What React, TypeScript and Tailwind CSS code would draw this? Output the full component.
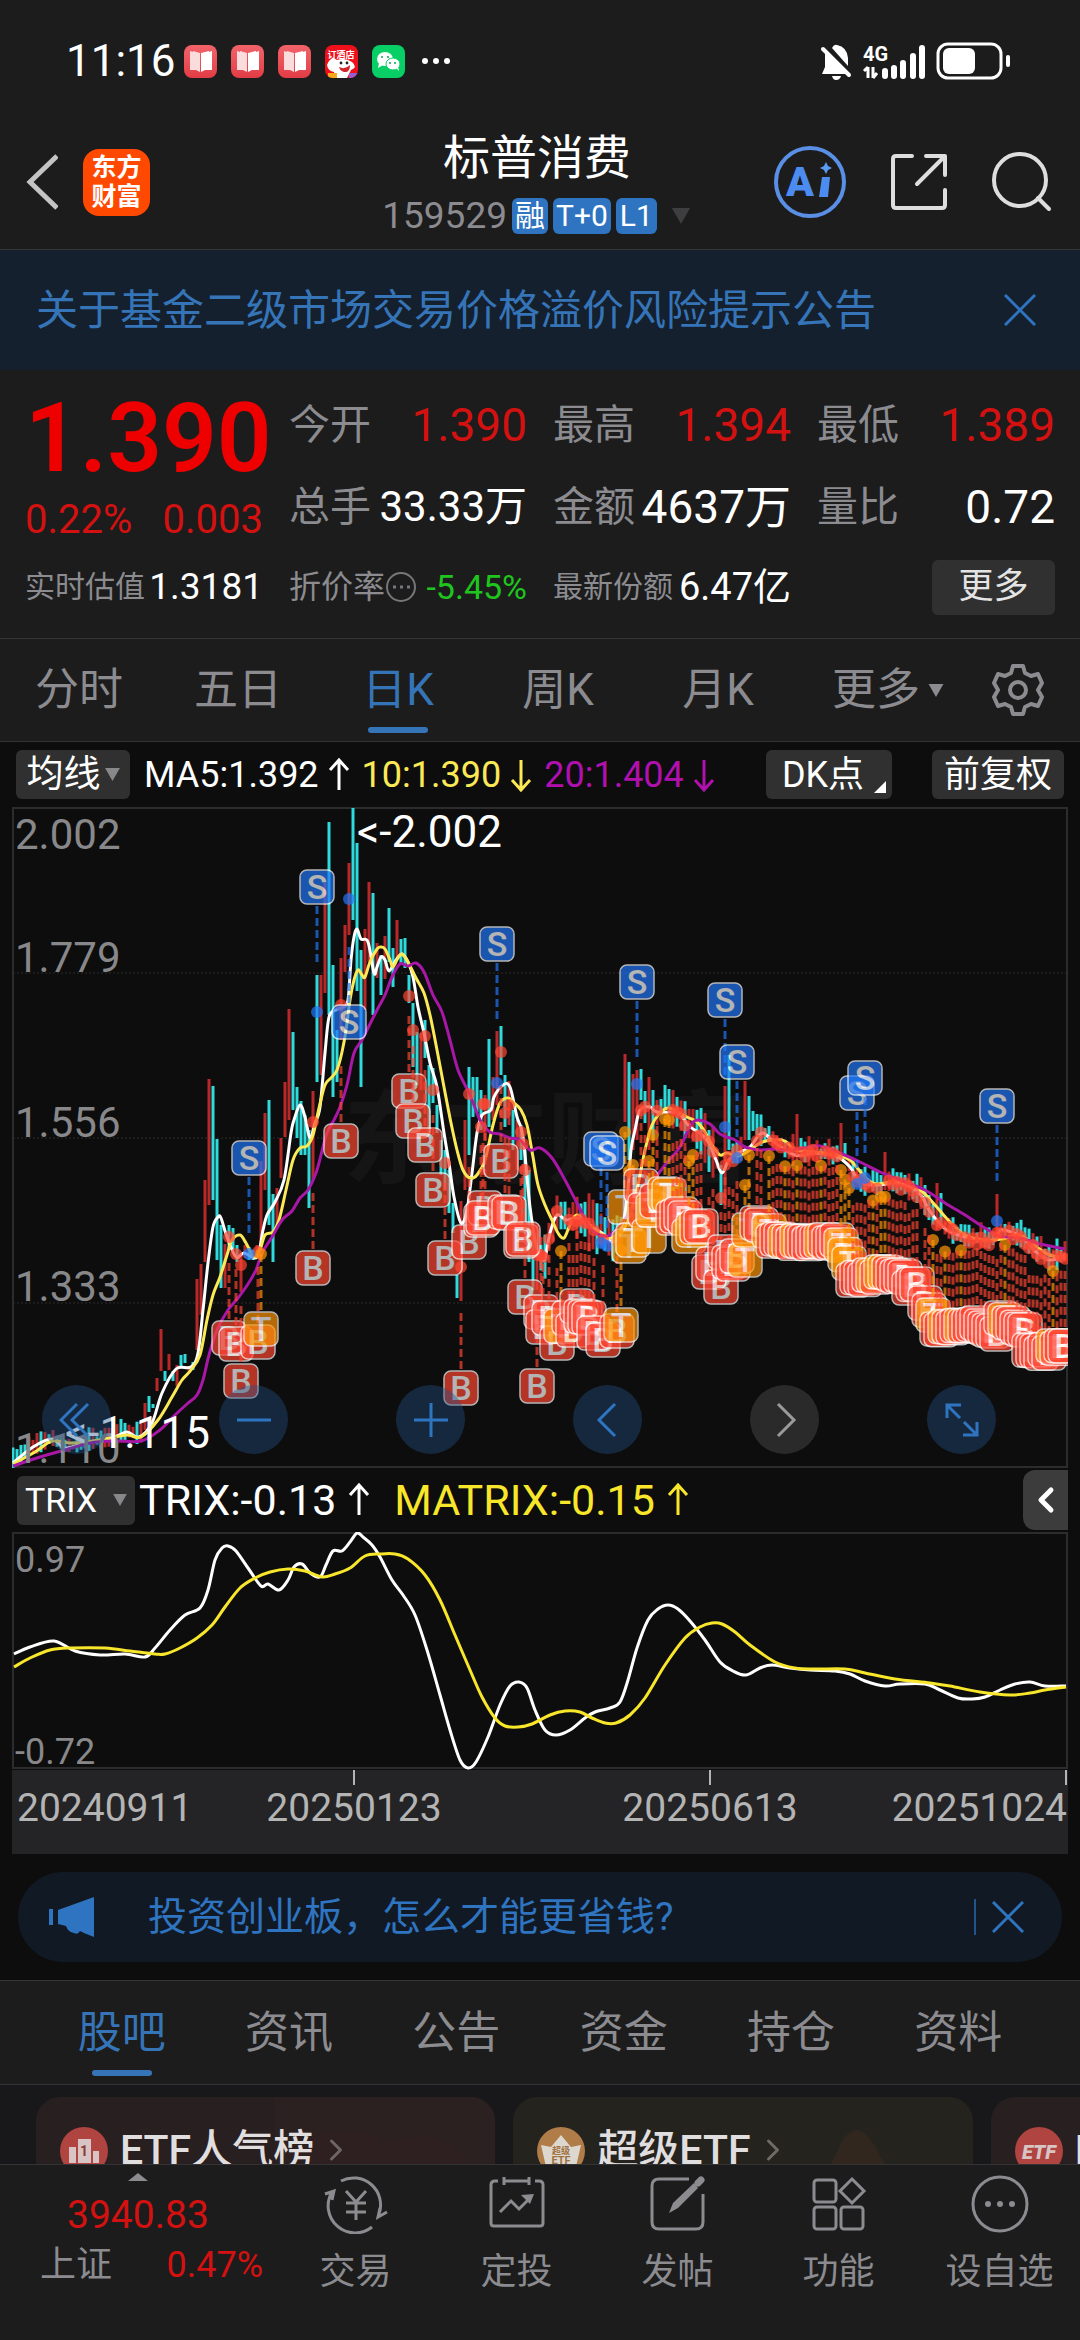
import React from 'react';
import { ChevronLeft, ChevronRight } from 'lucide-react';

type Point = [number, number];
type MarkType = 'B' | 'S' | 'T';

interface Mark {
  x: number;
  y: number;
  type: MarkType;
  dot?: number;
}

// ---------- chart helpers ----------

const smooth = (pts: Point[]) => {
  let d = `M${pts[0][0]} ${pts[0][1]}`;
  for (let i = 0; i < pts.length - 1; i++) {
    const p0 = pts[i - 1] || pts[i];
    const p1 = pts[i];
    const p2 = pts[i + 1];
    const p3 = pts[i + 2] || p2;
    const c = [
      p1[0] + (p2[0] - p0[0]) / 6,
      p1[1] + (p2[1] - p0[1]) / 6,
      p2[0] - (p3[0] - p1[0]) / 6,
      p2[1] - (p3[1] - p1[1]) / 6,
    ].map(v => v.toFixed(1));
    d += `C${c[0]} ${c[1]} ${c[2]} ${c[3]} ${p2[0]} ${p2[1]}`;
  }
  return d;
};

const valueAt = (pts: Point[], x: number) => {
  for (let i = 1; i < pts.length; i++) {
    if (pts[i][0] >= x) {
      const [ax, ay] = pts[i - 1];
      const [bx, by] = pts[i];
      return ay + ((x - ax) / (bx - ax || 1)) * (by - ay);
    }
  }
  return pts[pts.length - 1][1];
};

const noise = (n: number) => {
  const v = Math.sin(n * 12.9898) * 43758.5453;
  return v - Math.floor(v);
};

// ---------- chart data ----------

const ma5: Point[] = [
  [13, 1463], [33, 1447], [52, 1439], [65, 1448], [86, 1443], [114, 1437], [127, 1432], [139, 1437], [152, 1423],
  [162, 1393], [176, 1369], [191, 1367], [198, 1353], [203, 1310], [208, 1263], [213, 1227], [218, 1217], [221, 1218],
  [227, 1237], [236, 1257], [244, 1253], [257, 1257], [263, 1230], [267, 1215], [275, 1202], [284, 1180], [291, 1133],
  [294, 1120], [300, 1105], [305, 1117], [310, 1138], [315, 1123], [320, 1107], [325, 1053], [329, 1017], [336, 1010],
  [343, 1007], [348, 1000], [351, 960], [354, 937], [357, 929], [361, 939], [368, 942], [374, 973], [377, 967],
  [381, 957], [385, 960], [389, 971], [396, 960], [402, 954], [408, 962], [413, 977], [418, 1007], [424, 1033],
  [430, 1063], [437, 1087], [444, 1133], [449, 1163], [454, 1197], [461, 1223], [467, 1210], [472, 1173], [477, 1133],
  [482, 1115], [491, 1110], [494, 1097], [503, 1085], [510, 1087], [517, 1117], [523, 1137], [530, 1207], [537, 1250],
  [541, 1258], [545, 1258], [550, 1233], [557, 1215], [566, 1220], [578, 1218], [588, 1225], [602, 1233], [614, 1242],
  [623, 1223], [628, 1190], [631, 1150], [635, 1130], [640, 1110], [650, 1107], [657, 1112], [678, 1113], [688, 1125],
  [702, 1135], [709, 1143], [716, 1160], [722, 1173], [729, 1160], [740, 1152], [750, 1147], [762, 1133], [774, 1142],
  [795, 1155], [815, 1153], [836, 1156], [850, 1167], [860, 1182], [877, 1185], [898, 1183], [919, 1193], [929, 1210],
  [943, 1227], [953, 1233], [970, 1238], [995, 1240], [1001, 1230], [1022, 1237], [1036, 1252], [1050, 1260], [1065, 1255],
];

const ma10: Point[] = [
  [13, 1464], [35, 1452], [52, 1441], [70, 1443], [86, 1442], [105, 1439], [127, 1435], [141, 1437], [158, 1420],
  [172, 1397], [182, 1380], [191, 1370], [200, 1355], [207, 1320], [213, 1295], [220, 1277], [227, 1255], [232, 1240],
  [240, 1235], [246, 1243], [254, 1257], [260, 1250], [265, 1235], [273, 1232], [279, 1220], [286, 1190], [293, 1160],
  [300, 1148], [307, 1146], [313, 1135], [319, 1108], [325, 1085], [331, 1078], [337, 1070], [342, 1052], [346, 1030],
  [350, 1000], [354, 980], [358, 970], [362, 975], [365, 977], [370, 962], [377, 949], [381, 947], [385, 949],
  [390, 960], [393, 967], [398, 958], [402, 954], [408, 962], [416, 978], [424, 993], [430, 1015], [437, 1050],
  [444, 1087], [451, 1123], [457, 1150], [463, 1170], [470, 1178], [477, 1175], [485, 1160], [493, 1125], [500, 1103],
  [508, 1098], [514, 1103], [521, 1110], [527, 1125], [533, 1157], [538, 1185], [545, 1205], [552, 1220], [558, 1233],
  [564, 1238], [570, 1225], [577, 1215], [590, 1225], [603, 1235], [612, 1238], [622, 1232], [630, 1215], [637, 1190],
  [645, 1150], [652, 1125], [660, 1113], [668, 1108], [676, 1111], [687, 1117], [697, 1122], [705, 1132], [712, 1145],
  [720, 1155], [727, 1153], [738, 1156], [750, 1150], [760, 1143], [772, 1140], [785, 1141], [795, 1150], [815, 1152],
  [836, 1155], [850, 1160], [866, 1178], [877, 1184], [898, 1181], [920, 1190], [935, 1205], [948, 1220], [965, 1235],
  [985, 1240], [1002, 1239], [1020, 1235], [1035, 1246], [1050, 1255], [1065, 1258],
];

const ma20: Point[] = [
  [13, 1466], [40, 1457], [65, 1450], [90, 1443], [115, 1441], [141, 1441], [160, 1430], [175, 1415], [187, 1404],
  [197, 1395], [203, 1380], [209, 1355], [217, 1330], [228, 1310], [238, 1298], [248, 1284], [256, 1270], [262, 1253],
  [272, 1237], [282, 1220], [292, 1211], [300, 1198], [308, 1190], [316, 1173], [321, 1155], [327, 1133], [334, 1120],
  [340, 1107], [347, 1085], [354, 1053], [362, 1040], [368, 1028], [377, 1010], [385, 995], [392, 977], [400, 964],
  [408, 966], [416, 963], [424, 972], [433, 995], [442, 1012], [450, 1040], [458, 1070], [470, 1095], [480, 1120],
  [490, 1132], [500, 1134], [510, 1138], [520, 1140], [530, 1150], [540, 1148], [552, 1158], [565, 1180], [578, 1205],
  [590, 1228], [604, 1236], [614, 1232], [628, 1215], [650, 1185], [665, 1165], [680, 1147], [688, 1130], [693, 1122],
  [699, 1120], [710, 1124], [720, 1134], [735, 1140], [745, 1147], [760, 1150], [775, 1149], [790, 1150], [805, 1148],
  [820, 1146], [840, 1153], [860, 1162], [880, 1172], [900, 1180], [925, 1190], [945, 1203], [965, 1215], [985, 1228],
  [1000, 1236], [1020, 1238], [1040, 1244], [1065, 1249],
];

// x, high, low, 1 = up (red) / 0 = down (cyan)
const bars: [number, number, number, number][] = [
  [145, 1403, 1430, 1], [149, 1396, 1412, 0], [153, 1404, 1408, 0], [157, 1378, 1391, 1], [161, 1329, 1371, 1],
  [165, 1371, 1381, 0], [169, 1354, 1370, 1], [173, 1371, 1381, 0], [177, 1365, 1386, 1], [181, 1355, 1366, 0],
  [185, 1354, 1363, 0], [189, 1366, 1372, 1], [193, 1362, 1370, 0], [197, 1279, 1350, 1], [201, 1264, 1315, 1],
  [205, 1180, 1262, 1], [209, 1079, 1205, 1], [213, 1086, 1200, 0], [217, 1139, 1260, 0], [221, 1225, 1288, 0],
  [225, 1244, 1288, 1], [229, 1225, 1250, 0], [233, 1228, 1250, 0], [237, 1245, 1262, 0], [241, 1253, 1292, 1],
  [245, 1245, 1258, 1], [249, 1247, 1260, 0], [253, 1250, 1260, 0], [257, 1245, 1258, 1], [261, 1161, 1245, 1],
  [265, 1113, 1190, 1], [269, 1100, 1225, 0], [273, 1194, 1262, 0], [277, 1188, 1225, 1], [281, 1138, 1178, 1],
  [285, 1082, 1137, 1], [289, 1009, 1120, 1], [293, 1032, 1110, 0], [297, 1087, 1138, 0], [301, 1101, 1155, 0],
  [305, 1115, 1155, 0], [309, 1130, 1208, 0], [313, 1091, 1180, 1], [317, 975, 1082, 0], [321, 975, 1075, 1],
  [325, 883, 993, 1], [329, 822, 1015, 0], [333, 965, 1097, 0], [337, 1030, 1082, 0], [341, 958, 1040, 1],
  [345, 925, 972, 1], [349, 863, 935, 1], [353, 808, 920, 0], [357, 843, 991, 0], [361, 950, 1087, 0],
  [365, 929, 1010, 1], [369, 882, 962, 1], [373, 893, 1015, 0], [377, 943, 978, 1], [381, 955, 995, 0],
  [385, 936, 979, 1], [389, 908, 962, 0], [393, 948, 987, 0], [397, 920, 960, 1], [401, 939, 965, 0],
  [405, 938, 968, 0], [409, 975, 1003, 0], [413, 1003, 1067, 0], [417, 1032, 1085, 0], [421, 1033, 1090, 1],
  [425, 1020, 1058, 0], [429, 1065, 1133, 0], [433, 1068, 1103, 0], [437, 1105, 1133, 0], [441, 1140, 1175, 0],
  [445, 1150, 1190, 0], [449, 1170, 1213, 0], [453, 1203, 1233, 0], [457, 1275, 1298, 0], [461, 1201, 1301, 1],
  [465, 1120, 1190, 1], [469, 1067, 1155, 0], [473, 1077, 1117, 0], [477, 1077, 1112, 0], [481, 1090, 1130, 0],
  [485, 1095, 1140, 1], [489, 1039, 1127, 0], [493, 1077, 1120, 1], [497, 1031, 1105, 1], [501, 1026, 1075, 0],
  [505, 1075, 1127, 0], [509, 1081, 1125, 1], [513, 1110, 1150, 0], [517, 1120, 1170, 1], [521, 1125, 1160, 0],
  [525, 1150, 1240, 0], [529, 1170, 1262, 0], [533, 1230, 1290, 0], [537, 1225, 1290, 1],
  [625, 1054, 1122, 1], [629, 1062, 1160, 0], [633, 1074, 1150, 1], [637, 1070, 1140, 1], [641, 1069, 1100, 0],
  [645, 1091, 1123, 0], [649, 1077, 1150, 1], [653, 1090, 1140, 0], [657, 1100, 1125, 1], [661, 1099, 1115, 0],
  [665, 1085, 1108, 0], [669, 1089, 1108, 0], [709, 1130, 1172, 0], [721, 1165, 1205, 0], [725, 1086, 1205, 1],
  [729, 1055, 1150, 0], [745, 1081, 1140, 1], [749, 1096, 1140, 0], [753, 1111, 1131, 0], [757, 1114, 1135, 0],
  [769, 1126, 1142, 0], [797, 1114, 1160, 1], [801, 1138, 1150, 0], [841, 1123, 1160, 1], [845, 1143, 1158, 0],
  [885, 1152, 1190, 1], [925, 1185, 1215, 0], [929, 1195, 1220, 0], [937, 1183, 1230, 1], [941, 1193, 1225, 0],
  [997, 1194, 1240, 1], [1041, 1236, 1255, 1],
];

const barXs = new Set(bars.map(b => b[0]));
const allBars = [...bars];
for (let x = 13; x < 1066; x += 4) {
  if (barXs.has(x)) continue;
  const mid = valueAt(ma5, x);
  const half = x < 145 ? 3 + noise(x) * 6 : x < 720 ? 6 + noise(x) * 20 : 4 + noise(x) * 9;
  allBars.push([x, mid - half - noise(x + 1) * 8, mid + half, noise(x + 2) > 0.5 ? 1 : 0]);
}

const marks: Mark[] = [
  { x: 229, y: 1338, type: 'B', dot: 1237 },
  { x: 236, y: 1344, type: 'B', dot: 1254 },
  { x: 241, y: 1381, type: 'B', dot: 1265 },
  { x: 258, y: 1342, type: 'B', dot: 1252 },
  { x: 261, y: 1329, type: 'T', dot: 1254 },
  { x: 313, y: 1268, type: 'B', dot: 1122 },
  { x: 341, y: 1141, type: 'B', dot: 1005 },
  { x: 409, y: 1091, type: 'B', dot: 996 },
  { x: 413, y: 1121, type: 'B', dot: 1030 },
  { x: 425, y: 1145, type: 'B', dot: 1036 },
  { x: 433, y: 1190, type: 'B', dot: 1090 },
  { x: 445, y: 1258, type: 'B', dot: 1163 },
  { x: 469, y: 1242, type: 'B', dot: 1094 },
  { x: 461, y: 1388, type: 'B', dot: 1267 },
  { x: 481, y: 1220, type: 'B', dot: 1127 },
  { x: 485, y: 1208, type: 'B', dot: 1104 },
  { x: 483, y: 1218, type: 'B', dot: 1104 },
  { x: 501, y: 1161, type: 'B', dot: 1052 },
  { x: 505, y: 1212, type: 'B', dot: 1113 },
  { x: 509, y: 1213, type: 'B', dot: 1105 },
  { x: 521, y: 1241, type: 'B', dot: 1132 },
  { x: 523, y: 1239, type: 'B', dot: 1144 },
  { x: 525, y: 1297, type: 'B', dot: 1170 },
  { x: 537, y: 1386, type: 'B', dot: 1255 },
  { x: 541, y: 1312, type: 'B' },
  { x: 543, y: 1327, type: 'B' },
  { x: 549, y: 1318, type: 'B' },
  { x: 557, y: 1343, type: 'B' },
  { x: 561, y: 1326, type: 'T' },
  { x: 569, y: 1318, type: 'B' },
  { x: 573, y: 1330, type: 'B' },
  { x: 577, y: 1306, type: 'B' },
  { x: 581, y: 1316, type: 'B' },
  { x: 585, y: 1317, type: 'B' },
  { x: 589, y: 1318, type: 'B' },
  { x: 594, y: 1333, type: 'B' },
  { x: 603, y: 1340, type: 'B' },
  { x: 617, y: 1331, type: 'B' },
  { x: 621, y: 1325, type: 'T' },
  { x: 625, y: 1207, type: 'T' },
  { x: 629, y: 1246, type: 'T' },
  { x: 633, y: 1240, type: 'T' },
  { x: 641, y: 1186, type: 'B' },
  { x: 645, y: 1210, type: 'B' },
  { x: 649, y: 1236, type: 'T' },
  { x: 653, y: 1210, type: 'T' },
  { x: 657, y: 1201, type: 'B' },
  { x: 665, y: 1194, type: 'T' },
  { x: 669, y: 1195, type: 'T' },
  { x: 673, y: 1218, type: 'B' },
  { x: 677, y: 1216, type: 'B' },
  { x: 681, y: 1214, type: 'B' },
  { x: 685, y: 1218, type: 'B' },
  { x: 689, y: 1236, type: 'T' },
  { x: 693, y: 1230, type: 'T' },
  { x: 697, y: 1227, type: 'B' },
  { x: 701, y: 1226, type: 'B' },
  { x: 709, y: 1272, type: 'B' },
  { x: 713, y: 1264, type: 'B' },
  { x: 721, y: 1287, type: 'B', dot: 1198 },
  { x: 725, y: 1252, type: 'B' },
  { x: 729, y: 1262, type: 'B' },
  { x: 733, y: 1264, type: 'B' },
  { x: 737, y: 1256, type: 'B' },
  { x: 745, y: 1260, type: 'T' },
  { x: 749, y: 1230, type: 'T' },
  { x: 757, y: 1223, type: 'B' },
  { x: 761, y: 1225, type: 'B' },
  { x: 769, y: 1231, type: 'T' },
];

const range = (from: number, to: number, y0: number, y1: number, ts: number[]) => {
  for (let x = from; x <= to; x += 4) {
    const y = y0 + ((y1 - y0) * (x - from)) / (to - from) + Math.round(noise(x) * 4 - 2);
    marks.push({ x, y, type: ts.includes(x) ? 'T' : 'B' });
  }
};
range(773, 837, 1241, 1242, [785, 797, 821]);
range(841, 849, 1246, 1265, [841, 849, 845]);
range(853, 877, 1279, 1276, [873]);
range(881, 905, 1272, 1277, [881, 885]);
range(909, 917, 1286, 1283, []);
range(925, 933, 1304, 1314, [933]);
range(937, 977, 1328, 1325, [945, 961]);
range(981, 997, 1326, 1334, []);
range(1001, 1025, 1319, 1330, [1005]);
range(1029, 1049, 1350, 1352, []);
range(1053, 1065, 1346, 1347, [1053]);

const sells: Mark[] = [
  { x: 249, y: 1158, type: 'S', dot: 1254 },
  { x: 317, y: 887, type: 'S', dot: 1012 },
  { x: 349, y: 1022, type: 'S', dot: 899 },
  { x: 497, y: 944, type: 'S', dot: 1083 },
  { x: 601, y: 1149, type: 'S', dot: 1243 },
  { x: 607, y: 1153, type: 'S', dot: 1246 },
  { x: 637, y: 982, type: 'S', dot: 1084 },
  { x: 725, y: 1000, type: 'S', dot: 1127 },
  { x: 737, y: 1062, type: 'S', dot: 1158 },
  { x: 857, y: 1093, type: 'S', dot: 1184 },
  { x: 865, y: 1078, type: 'S', dot: 1178 },
  { x: 997, y: 1106, type: 'S', dot: 1221 },
];

const markColor: Record<MarkType, string> = {
  B: 'rgb(255,70,50)',
  S: 'rgb(33,120,250)',
  T: 'rgb(255,150,5)',
};

const trix: Point[] = [
  [14, 1654], [30, 1647], [54, 1641], [75, 1651], [100, 1655], [125, 1654], [145, 1657], [155, 1648], [170, 1630],
  [185, 1615], [200, 1608], [208, 1590], [215, 1560], [222, 1548], [228, 1546], [236, 1551], [248, 1568], [261, 1586],
  [268, 1584], [279, 1590], [288, 1580], [294, 1567], [302, 1564], [310, 1573], [320, 1577], [326, 1565], [333, 1551],
  [342, 1551], [350, 1542], [357, 1533], [363, 1537], [372, 1545], [380, 1557], [392, 1580], [403, 1595], [415, 1615],
  [427, 1650], [440, 1695], [450, 1730], [460, 1760], [468, 1768], [476, 1762], [488, 1737], [500, 1705], [510, 1686],
  [519, 1682], [527, 1688], [535, 1710], [545, 1730], [556, 1735], [570, 1730], [585, 1718], [595, 1712], [610, 1708],
  [620, 1702], [628, 1680], [637, 1648], [648, 1620], [658, 1609], [668, 1605], [678, 1609], [690, 1621], [705, 1640],
  [720, 1662], [733, 1671], [746, 1675], [760, 1668], [772, 1665], [790, 1668], [810, 1670], [835, 1671], [850, 1674],
  [865, 1681], [885, 1686], [900, 1684], [925, 1684], [940, 1690], [958, 1698], [972, 1699], [985, 1697], [1000, 1690],
  [1015, 1684], [1030, 1682], [1045, 1686], [1066, 1686],
];

const matrix: Point[] = [
  [14, 1667], [30, 1658], [50, 1650], [70, 1648], [105, 1648], [130, 1651], [155, 1654], [165, 1654], [180, 1648],
  [197, 1638], [212, 1625], [225, 1607], [240, 1588], [255, 1578], [270, 1572], [288, 1569], [305, 1571], [322, 1577],
  [335, 1574], [350, 1568], [365, 1556], [380, 1554], [395, 1554], [408, 1559], [425, 1575], [440, 1600], [455, 1635],
  [470, 1670], [482, 1697], [495, 1718], [505, 1726], [518, 1727], [532, 1724], [550, 1715], [565, 1711], [580, 1712],
  [592, 1718], [605, 1723], [616, 1723], [630, 1715], [645, 1698], [665, 1665], [685, 1638], [700, 1627], [712, 1623],
  [722, 1624], [735, 1632], [750, 1645], [775, 1662], [795, 1668], [815, 1669], [845, 1669], [865, 1673], [895, 1679],
  [930, 1683], [950, 1686], [980, 1692], [1010, 1695], [1030, 1693], [1045, 1690], [1066, 1687],
];

// ---------- small pieces ----------

const Arrow: React.FC<{ down?: boolean }> = ({ down }) => (
  <svg viewBox="0 0 22 36" className="w-[22px] h-9 shrink-0" fill="none" stroke="currentColor" strokeWidth="3">
    <path d={down ? 'M11 3V33M2 23L11 33L20 23' : 'M11 33V3M2 13L11 3L20 13'} />
  </svg>
);

const Triangle: React.FC<{ className: string }> = ({ className }) => (
  <svg viewBox="0 0 16 14" className={className} fill="currentColor">
    <path d="M0 0H16L8 14Z" />
  </svg>
);

const CloseIcon: React.FC = () => (
  <svg viewBox="0 0 32 32" className="w-8 h-8" fill="none" stroke="#2f74c0" strokeWidth="3">
    <path d="M1 1L31 31M31 1L1 31" />
  </svg>
);

const StatusBar: React.FC = () => (
  <div className="h-[122px] pl-[66px] pr-[68px] flex items-center justify-between text-white">
    <div className="flex items-center">
      <span className="w-[118px] text-[44px] leading-[48px]">11:16</span>
      <div className="flex items-center gap-[14px]">
        {[1, 2, 3].map(i => (
          <div key={i} className="w-[33px] h-[33px] rounded-lg bg-gradient-to-b from-[#f2636a] to-[#e23c46] flex items-center justify-center">
            <svg viewBox="0 0 24 24" className="w-6 h-6">
              <path d="M1 2L4 3V2L11 4V23L7 21H1Z" fill="#fbdcdd" />
              <path d="M23 2L20 3V2L12 4V23L16 21H23Z" fill="#fff" />
            </svg>
          </div>
        ))}
        <div className="w-[33px] h-[33px] rounded-lg overflow-hidden bg-[#f0101c]">
          <svg viewBox="0 0 33 33" className="w-full h-full">
            <text x="16" y="13" fontSize="9" fontWeight="700" fill="#fff" textAnchor="middle">订酒店</text>
            <path d="M2 20Q6 10 12 15Q20 12 27 17Q33 22 26 25L22 33H10L9 27Q3 26 2 20Z" fill="#fff" />
            <path d="M14 22Q20 25 25 20Q25 28 19 27Q15 26 14 22Z" fill="#d5222a" />
            <circle cx="16" cy="18" r="1.4" fill="#222" />
            <circle cx="22" cy="18" r="1.4" fill="#222" />
            <path d="M3 28H12V33H3Z" fill="#f7a81b" />
            <path d="M24 28H33V33H24Z" fill="#9d5bd0" />
          </svg>
        </div>
        <div className="w-[33px] h-[33px] rounded-lg bg-[#07cf66]">
          <svg viewBox="0 0 33 33" className="w-full h-full">
            <ellipse cx="13" cy="14" rx="8" ry="7" fill="#fff" />
            <path d="M7 18L6 23L11 20Z" fill="#fff" />
            <ellipse cx="21" cy="19" rx="7" ry="6" fill="#fff" stroke="#07cf66" />
            <path d="M24 23L27 26L26 21Z" fill="#fff" />
            <g fill="#07a852">
              <circle cx="10" cy="12" r="1" />
              <circle cx="16" cy="12" r="1" />
              <circle cx="18" cy="18" r="1" />
              <circle cx="23" cy="18" r="1" />
            </g>
          </svg>
        </div>
      </div>
      <svg viewBox="0 0 28 8" className="w-7 h-2 ml-[17px]" fill="#fff">
        <circle cx="3" cy="4" r="3" />
        <circle cx="14" cy="4" r="3" />
        <circle cx="25" cy="4" r="3" />
      </svg>
    </div>
    <svg viewBox="0 0 192 40" className="w-[192px] h-10" fill="#fff">
      <path d="M12 7Q14 3 17 4Q27 6 28 17V25Z" />
      <path d="M5 12L26 33H2L5 26Z" />
      <path d="M3 8L29 34" stroke="#fff" strokeWidth="4" strokeLinecap="round" />
      <path d="M12 35H21Q20 39 16 39Q13 39 12 35Z" />
      <text x="43" y="20" fontSize="20" fontWeight="700">4G</text>
      <path d="M48 26V37M48 26L44 30M53 26V37M53 37L57 32" stroke="#fff" strokeWidth="3" fill="none" />
      <g stroke="#fff" strokeWidth="6" strokeLinecap="round">
        <path d="M65 30V35M74 27V35M83 22V35M93 15V35M102 7V35" />
      </g>
      <rect x="118" y="3" width="63" height="34" rx="10" fill="none" stroke="#fff" strokeWidth="3" />
      <rect x="123" y="7" width="32" height="26" rx="6" />
      <rect x="186" y="14" width="4" height="12" rx="2" />
    </svg>
  </div>
);

const Header: React.FC = () => (
  <header className="h-[128px] pb-[7px] pl-[22px] pr-[28px] border-b border-[#343436] flex items-center justify-between">
    <div className="flex-1 flex items-center gap-[25px]">
      <button aria-label="返回">
        <svg viewBox="0 0 36 60" className="w-9 h-[60px]" fill="none" stroke="#c4c4c4" strokeWidth="5">
          <path d="M35 4L8 30L35 56" />
        </svg>
      </button>
      <div className="w-[67px] h-[67px] rounded-2xl bg-[#ff4800] text-white font-bold text-[25px] leading-[29px] flex flex-col items-center justify-center">
        <span>东方</span>
        <span>财富</span>
      </div>
    </div>
    <div className="flex flex-col items-center gap-3">
      <h1 className="text-[47px] leading-[56px] text-white">标普消费</h1>
      <div className="flex items-center gap-[5px] text-white text-[30px] leading-[36px]">
        <span className="text-[37px] text-[#8b8b90]">159529</span>
        <span className="bg-[#2f74c0] rounded-md px-[3px]">融</span>
        <span className="bg-[#2f74c0] rounded-md px-[3px]">T+0</span>
        <span className="bg-[#2f74c0] rounded-md px-1">L1</span>
        <Triangle className="w-[22px] h-4 ml-2 text-[#3e3e40]" />
      </div>
    </div>
    <div className="flex-1 flex items-center justify-end gap-[43px]">
      <button aria-label="Ai">
        <svg viewBox="0 0 72 72" className="w-[72px] h-[72px]" fill="none">
          <circle cx="36" cy="36" r="34" stroke="#5a8fe6" strokeWidth="4" />
          <text x="12" y="50" fontSize="41" fontWeight="900" fill="#4c8cf0">A</text>
          <path d="M48 31H56L54 51H45Z" fill="#4c8cf0" />
          <path d="M52 16L54 20L58 22L54 24L52 28L50 24L46 22L50 20Z" fill="#5a9cf5" />
        </svg>
      </button>
      <button aria-label="分享">
        <svg viewBox="0 0 60 60" className="w-[60px] h-[60px]" fill="none" stroke="#dedede" strokeWidth="4" strokeLinecap="round" strokeLinejoin="round">
          <path d="M23 4H7Q4 4 4 7V53Q4 56 7 56H53Q56 56 56 53V38M37 4H56V23M56 4L28 32" />
        </svg>
      </button>
      <button aria-label="搜索">
        <svg viewBox="0 0 60 60" className="w-[60px] h-[60px]" fill="none" stroke="#dedede" strokeWidth="4" strokeLinecap="round">
          <circle cx="28" cy="28" r="26" />
          <path d="M46 46L57 57" />
        </svg>
      </button>
    </div>
  </header>
);

interface FieldProps {
  label: string;
  value: string;
  tone?: string;
  size?: string;
}

const Field: React.FC<FieldProps> = ({ label, value, tone = 'text-white', size = 'text-[46px]' }) => (
  <div className="h-[82px] flex items-center justify-between whitespace-nowrap">
    <span className="text-[41px] text-[#8b8b90]">{label}</span>
    <span className={`${size} ${tone}`}>{value}</span>
  </div>
);

const Quote: React.FC = () => (
  <section className="pt-[14px] pb-3 px-[25px] grid grid-cols-4 gap-x-[26px] border-b border-[#343436] leading-[48px]">
    <div className="row-span-2 pt-1">
      <div className="text-[96px] leading-[100px] font-semibold text-[#ee0000] text-center">1.390</div>
      <div className="mt-2 flex justify-between text-[40px] text-[#d41111]">
        <span>0.22%</span>
        <span>0.003</span>
      </div>
    </div>
    <Field label="今开" value="1.390" tone="text-[#d41111]" />
    <Field label="最高" value="1.394" tone="text-[#d41111]" />
    <Field label="最低" value="1.389" tone="text-[#d41111]" />
    <Field label="总手" value="33.33万" size="text-[42px]" />
    <Field label="金额" value="4637万" />
    <Field label="量比" value="0.72" />
    <div className="h-[78px] flex items-center justify-between whitespace-nowrap">
      <span className="text-[30px] text-[#8b8b90]">实时估值</span>
      <span className="text-[37px] text-white">1.3181</span>
    </div>
    <div className="h-[78px] flex items-center whitespace-nowrap">
      <span className="text-[32px] text-[#8b8b90]">折价率</span>
      <svg viewBox="0 0 32 32" className="w-8 h-8" fill="none" stroke="#77777b" strokeWidth="2">
        <circle cx="16" cy="16" r="14" />
        <path d="M8 16H11M15 16H18M22 16H25" strokeWidth="3" />
      </svg>
      <span className="ml-auto text-[34px] text-[#1fc41f]">-5.45%</span>
    </div>
    <div className="h-[78px] flex items-center justify-between whitespace-nowrap">
      <span className="text-[30px] text-[#8b8b90]">最新份额</span>
      <span className="text-[38px] text-white">6.47亿</span>
    </div>
    <div className="h-[78px] flex items-center justify-end">
      <button className="w-[123px] h-[55px] rounded-md bg-[#303030] text-[35px] text-[#e4e4e4]">更多</button>
    </div>
  </section>
);

const periods = ['分时', '五日', '日K', '周K', '月K'];

const PeriodTabs: React.FC = () => (
  <nav className="h-[103px] pr-[22px] grid grid-cols-[158fr_160fr_160fr_160fr_160fr_180fr_80fr] border-b border-[#343436] text-[44px] text-[#8b8b90]">
    {periods.map(p => (
      <button key={p} className={`relative ${p === '日K' ? 'text-[#3674b8]' : ''}`}>
        {p}
        {p === '日K' && <span className="absolute left-1/2 -ml-[30px] bottom-2 w-[60px] h-[6px] rounded-full bg-[#3674b8]" />}
      </button>
    ))}
    <button className="flex items-center justify-center gap-2">
      更多
      <Triangle className="w-4 h-[13px]" />
    </button>
    <button aria-label="设置" className="flex items-center justify-center">
      <svg viewBox="0 0 52 52" className="w-[52px] h-[52px]" fill="none" stroke="currentColor" strokeWidth="4" strokeLinejoin="round">
        <path d="M21 2H31L33 9L39 12L46 10L50 19L46 26L50 33L46 42L39 40L33 43L31 50H21L19 43L13 40L6 42L2 33L6 26L2 19L6 10L13 12L19 9Z" />
        <circle cx="26" cy="26" r="8" />
      </svg>
    </button>
  </nav>
);

const MarkBox: React.FC<{ mark: Mark }> = ({ mark }) => {
  const { x, y, type } = mark;
  const color = markColor[type];
  const below = type === 'S' && !(x === 349);
  return (
    <g>
      <path
        d={below ? `M${x} ${y + 19}V${y + 75}` : `M${x} ${y - 75}V${y - 18}`}
        stroke={color}
        strokeWidth="3"
        strokeDasharray="8 4"
        opacity="0.68"
      />
      <g opacity="0.69">
        <rect x={x - 17} y={y - 17} width="34" height="34" rx="7" fill={color} stroke="#fff" strokeWidth="1.500" />
        <text x={x} y={y + 12} fontSize="34" fontWeight="500" fill="#fff" textAnchor="middle">{type}</text>
      </g>
    </g>
  );
};

const KLineChart: React.FC = () => {
  const dots = [...marks, ...sells];
  return (
    <div className="relative">
      <svg viewBox="12 807 1056 661" className="block w-full" fill="none">
        <g stroke="#2c2c2e" strokeWidth="2">
          <rect x="13" y="808" width="1054" height="659" />
          <path d="M13 973H1067M13 1138H1067M13 1303H1067" strokeWidth="1" strokeDasharray="2 2" />
        </g>
        <text x="343" y="1176" fontSize="102" fontWeight="700" fill="#151515">东方财富</text>
        {allBars.map(([x, top, bottom, up]) => (
          <path key={x} d={`M${x} ${top}V${bottom}`} stroke={up ? '#b82828' : '#2fdada'} strokeWidth="3" />
        ))}
        <path d={smooth(ma5)} stroke="#fff" strokeWidth="3" />
        <path d={smooth(ma10)} stroke="#fbe956" strokeWidth="3" />
        <path d={smooth(ma20)} stroke="#a817a6" strokeWidth="3" />
        {dots.map((m, i) => (
          <circle
            key={i}
            cx={m.x}
            cy={m.dot ?? (m.type === 'T' ? m.y - 75 : valueAt(ma5, m.x) + noise(i) * 10 - 4)}
            r="6"
            fill={markColor[m.type]}
            opacity="0.7"
          />
        ))}
        {marks.map((m, i) => <MarkBox key={i} mark={m} />)}
        {sells.map((m, i) => <MarkBox key={i} mark={m} />)}
        <g fontSize="42" fill="#88888b">
          <text x="15" y="849">2.002</text>
          <text x="15" y="972">1.779</text>
          <text x="15" y="1137">1.556</text>
          <text x="15" y="1301">1.333</text>
          <text x="15" y="1463">1.110</text>
        </g>
        <g fontSize="44" fill="#fff">
          <text x="357" y="847">&lt;-2.002</text>
          <text x="65" y="1448">&lt;-1.115</text>
        </g>
      </svg>
      <div className="absolute left-[30px] right-[72px] bottom-[14px] flex justify-between text-[#2f74c0]">
        {['最早', '缩小', '放大', '向左', '向右', '全屏'].map((label, i) => (
          <button
            key={label}
            aria-label={label}
            className={`w-[69px] h-[69px] rounded-full flex items-center justify-center ${i === 4 ? 'bg-[#2a2a2a] text-[#9a9a9a]' : 'bg-[#26538a]/40'}`}
          >
            <svg viewBox="0 0 36 36" className="w-9 h-9" fill="none" stroke="currentColor" strokeWidth="3">
              {i === 0 && <path d="M18 2L2 18L18 34M29 2L13 18L29 34" />}
              {i === 1 && <path d="M1 18H35" />}
              {i === 2 && <path d="M1 18H35M18 1V35" />}
              {i === 3 && <path d="M25 2L9 18L25 34" />}
              {i === 4 && <path d="M11 2L27 18L11 34" />}
              {i === 5 && <path d="M3 16V3H17M3 3L16 16M33 20V33H19M33 33L20 20" />}
            </svg>
          </button>
        ))}
      </div>
    </div>
  );
};

const TrixChart: React.FC = () => (
  <svg viewBox="12 1532 1056 322" className="block w-full" fill="none">
    <rect x="13" y="1533" width="1054" height="235" stroke="#2c2c2e" strokeWidth="2" />
    <rect x="12" y="1770" width="1056" height="84" fill="#242426" />
    <path d={smooth(trix)} stroke="#fff" strokeWidth="3" />
    <path d={smooth(matrix)} stroke="#f8e62b" strokeWidth="3" />
    <g fontSize="36" fill="#88888b">
      <text x="15" y="1572">0.97</text>
      <text x="15" y="1764">-0.72</text>
    </g>
    <path d="M354 1770V1785M710 1770V1785M1066 1770V1785" stroke="#b4b4b4" strokeWidth="2" />
    <g fontSize="39" fill="#b4b4b4">
      <text x="17" y="1821">20240911</text>
      <text x="354" y="1821" textAnchor="middle">20250123</text>
      <text x="710" y="1821" textAnchor="middle">20250613</text>
      <text x="1067" y="1821" textAnchor="end">20251024</text>
    </g>
  </svg>
);

const ChartPanel: React.FC = () => (
  <section className="px-3 bg-[#0d0d0d]">
    <div className="h-[65px] px-1 flex items-center text-[36px] text-white whitespace-nowrap">
      <button className="w-[114px] h-[49px] rounded-md bg-[#303030] text-[37px] leading-[46px] flex items-center justify-center">
        均线
        <Triangle className="w-[15px] h-[13px] ml-1 text-[#88888b]" />
      </button>
      <span className="ml-[14px] flex items-center gap-[9px]">MA5:1.392<Arrow /></span>
      <span className="ml-3 flex items-center gap-[9px] text-[#fbe956]">10:1.390<Arrow down /></span>
      <span className="ml-3 flex items-center gap-[9px] text-[#b010ae]">20:1.404<Arrow down /></span>
      <button className="relative ml-auto w-[126px] h-[49px] rounded-md bg-[#303030] pr-3 leading-[46px]">
        DK点
        <svg viewBox="0 0 12 12" className="absolute right-[6px] bottom-[6px] w-3 h-3" fill="#fff">
          <path d="M12 0V12H0Z" />
        </svg>
      </button>
      <button className="ml-10 w-[132px] h-[49px] rounded-md bg-[#303030] leading-[46px]">前复权</button>
    </div>
    <KLineChart />
    <div className="h-16 pl-[5px] flex items-center text-[43px] text-white whitespace-nowrap">
      <button className="w-[118px] h-[49px] rounded-md bg-[#303030] text-[34px] flex items-center justify-center gap-4">
        TRIX
        <Triangle className="w-[14px] h-[12px] text-[#88888b]" />
      </button>
      <span className="ml-1 flex items-center gap-3">TRIX:-0.13<Arrow /></span>
      <span className="ml-6 flex items-center gap-3 text-[#f8e62b]">MATRIX:-0.15<Arrow /></span>
      <button aria-label="展开" className="ml-auto w-[45px] h-[60px] rounded-l-xl bg-[#3c3c3c] flex items-center justify-center">
        <ChevronLeft className="w-10 h-10" strokeWidth={3} />
      </button>
    </div>
    <TrixChart />
    <div className="py-[18px] px-[6px]">
      <div className="h-[90px] rounded-full bg-[#111a24] pl-[30px] pr-[38px] flex items-center text-[39px] text-[#2f74c0]">
        <svg viewBox="0 0 48 42" className="w-12 h-[42px]" fill="currentColor">
          <path d="M1 13H5V29H1ZM10 14L46 1V41L36 37L32 35Q30 39 26 37Q20 36 18 30L10 28Z" />
        </svg>
        <span className="ml-[52px]">投资创业板，怎么才能更省钱?</span>
        <span className="ml-auto w-[2px] h-9 bg-[#22548c]" />
        <button aria-label="关闭" className="ml-4"><CloseIcon /></button>
      </div>
    </div>
  </section>
);

const sections = ['股吧', '资讯', '公告', '资金', '持仓', '资料'];

const SectionTabs: React.FC = () => (
  <nav className="h-[105px] px-[38px] grid grid-cols-6 border-y border-[#343436] text-[44px] text-[#8b8b90]">
    {sections.map((s, i) => (
      <button key={s} className={`relative ${i === 0 ? 'text-[#3674b8]' : ''}`}>
        {s}
        {i === 0 && <span className="absolute left-1/2 -ml-[30px] bottom-2 w-[60px] h-[6px] rounded-full bg-[#3674b8]" />}
      </button>
    ))}
  </nav>
);

const Cards: React.FC = () => (
  <div className="flex-1 min-h-0 overflow-hidden bg-[#18181a] pt-3 pl-9 flex items-start gap-[18px] text-[41px] leading-[46px] font-medium text-[#e0dede] whitespace-nowrap">
    <a href="#rank" className="relative w-[44%] h-[200px] shrink-0 rounded-3xl overflow-hidden bg-[#281f20] pt-[30px] pl-6 flex items-start">
      <svg viewBox="0 0 220 200" className="absolute right-0 top-0 w-[220px] h-[200px]" fill="#2e2021">
        <path d="M0 0H220V200H0Z" fill="#2b2121" />
        <path d="M36 40Q90 24 110 46Q180 20 206 90L190 200H36Z" />
        <path d="M60 85L90 84V120L110 84H140V200H60Z" fill="#381f20" />
      </svg>
      <svg viewBox="0 0 48 48" className="relative w-12 h-12 mr-3" fill="#d8c4c4">
        <circle cx="24" cy="24" r="24" fill="#b04440" />
        <path d="M9 20H16V36H9ZM18 12H31V36H18ZM33 24H39V36H33Z" />
        <text x="24" y="29" fontSize="14" fontWeight="700" fill="#8a3a36" textAnchor="middle">1</text>
      </svg>
      <span className="relative">ETF人气榜</span>
      <ChevronRight className="relative w-9 h-9 mt-[5px] ml-1 text-[#6e6666]" strokeWidth={2} />
    </a>
    <a href="#super" className="relative w-[44%] h-[200px] shrink-0 rounded-3xl overflow-hidden bg-[#25231e] pt-[30px] pl-6 flex items-start">
      <svg viewBox="0 0 80 80" className="absolute right-[75px] top-[30px] w-20 h-20" fill="#31271f">
        <path d="M0 60Q14 36 22 18Q38 -12 56 18L80 60V80H0Z" />
      </svg>
      <svg viewBox="0 0 48 48" className="w-12 h-12 mr-3" fill="#ddd8cf">
        <circle cx="24" cy="24" r="24" fill="#b07c48" />
        <path d="M4 18L14 20L24 8L34 20L44 18L38 44H10Z" />
        <text x="24" y="27" fontSize="9" fontWeight="700" fill="#a07040" textAnchor="middle">超级</text>
        <text x="24" y="37" fontSize="11" fontWeight="700" fill="#a07040" textAnchor="middle">ETF</text>
      </svg>
      <span>超级ETF</span>
      <ChevronRight className="w-9 h-9 mt-[5px] ml-1 text-[#6e6b66]" strokeWidth={2} />
    </a>
    <a href="#etf" className="w-[44%] h-[200px] shrink-0 rounded-3xl bg-[#281f20] pt-[30px] pl-6 flex items-start">
      <svg viewBox="0 0 48 48" className="w-12 h-12 mr-3 shrink-0" fill="#d8c4c4">
        <circle cx="24" cy="24" r="24" fill="#b04440" />
        <text x="24" y="32" fontSize="20" fontWeight="900" fontStyle="italic" textAnchor="middle">ETF</text>
      </svg>
      <span>ETF</span>
    </a>
  </div>
);

const actions: { label: string; icon: React.ReactNode }[] = [
  {
    label: '交易',
    icon: (
      <>
        <path d="M18 7A27 27 0 0 1 56 40M49 53A27 27 0 0 1 9 18M2 20L11 17L9 26M64 38L55 43L57 34" />
        <path d="M23 17L33 28L43 17M33 28V46M23 29H43M23 38H43" />
      </>
    ),
  },
  {
    label: '定投',
    icon: (
      <>
        <path d="M14 7H11Q7 7 7 11V49Q7 52 10 52H56Q59 52 59 49V11Q59 7 55 7H51M20 3V11M45 3V11M20 7H45" />
        <path d="M16 38L27 27L35 35L46 24" />
        <path d="M37 21L50 20L46 30Z" fill="currentColor" stroke="none" />
      </>
    ),
  },
  {
    label: '发帖',
    icon: (
      <>
        <path d="M44 5H14Q7 5 7 12V48Q7 55 14 55H51Q58 55 58 48V20" />
        <path d="M24 39L28 29L49 9L53 14L33 34Z" fill="currentColor" stroke="none" />
        <path d="M53 9L56 6" strokeWidth="7" strokeLinecap="round" />
      </>
    ),
  },
  {
    label: '功能',
    icon: (
      <>
        <rect x="8" y="6" width="22" height="22" rx="3" />
        <rect x="8" y="33" width="22" height="22" rx="3" />
        <rect x="35" y="33" width="22" height="22" rx="3" />
        <path d="M46 5L58 17L46 29L34 17Z" />
      </>
    ),
  },
  {
    label: '设自选',
    icon: (
      <>
        <circle cx="33" cy="30" r="27" />
        <g fill="currentColor" stroke="none">
          <circle cx="21" cy="30" r="3" />
          <circle cx="33" cy="30" r="3" />
          <circle cx="45" cy="30" r="3" />
        </g>
      </>
    ),
  },
];

const BottomBar: React.FC = () => (
  <footer className="h-[176px] shrink-0 border-t border-[#343436] bg-[#1c1c1c] flex text-[#8b8b90]">
    <div className="w-[275px] pt-2 pl-10 pr-3">
      <svg viewBox="0 0 20 8" className="w-5 h-2 ml-[88px]" fill="currentColor">
        <path d="M0 8L10 0L20 8Z" />
      </svg>
      <div className="mt-3 pl-[27px] text-[39px] leading-[44px] text-[#d41111]">3940.83</div>
      <div className="mt-1 flex justify-between text-[36px] leading-[48px]">
        <span>上证</span>
        <span className="text-[#d41111]">0.47%</span>
      </div>
    </div>
    <div className="flex-1 grid grid-cols-5">
      {actions.map(a => (
        <button key={a.label} className="pt-[9px] flex flex-col items-center justify-start text-[36px] leading-[48px] whitespace-nowrap">
          <svg viewBox="0 0 66 60" className="w-[66px] h-[60px]" fill="none" stroke="currentColor" strokeWidth="3">
            {a.icon}
          </svg>
          <span className="mt-[14px]">{a.label}</span>
        </button>
      ))}
    </div>
  </footer>
);

export default function App() {
  return (
    <div className="h-screen flex flex-col overflow-hidden bg-[#1c1c1c] font-['Roboto','Noto_Sans_CJK_SC',sans-serif]">
      <StatusBar />
      <Header />
      <div className="h-[120px] pl-9 pr-11 flex items-center justify-between bg-[#14202e] text-[42px] text-[#3674b8]">
        <a href="#notice">关于基金二级市场交易价格溢价风险提示公告</a>
        <button aria-label="关闭"><CloseIcon /></button>
      </div>
      <Quote />
      <PeriodTabs />
      <ChartPanel />
      <SectionTabs />
      <Cards />
      <BottomBar />
    </div>
  );
}
